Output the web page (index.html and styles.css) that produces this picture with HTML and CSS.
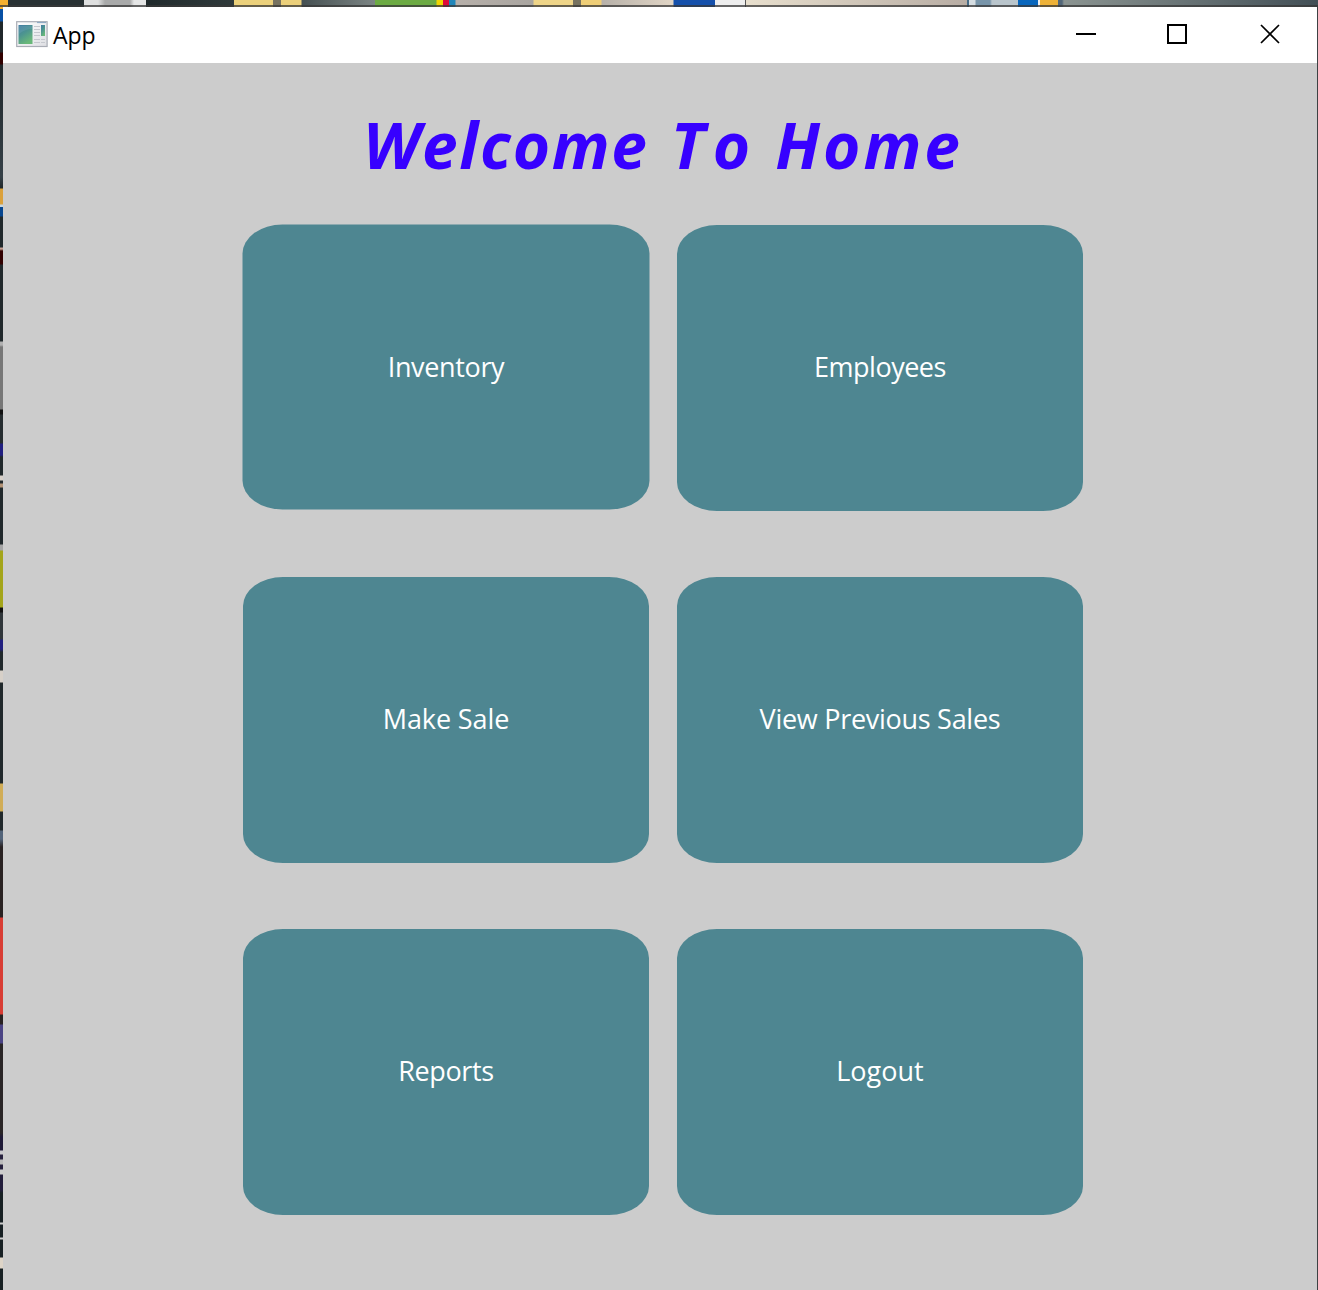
FILE: index.html
```html
<!DOCTYPE html>
<html lang="en">
<head>
<meta charset="utf-8">
<title>App</title>
<link rel="stylesheet" href="styles.css">
</head>
<body>
<div class="desktop">
  <div class="backdrop-top"></div>
  <div class="backdrop-left"></div>
  <main class="window">
    <header class="titlebar">
      <svg class="app-icon" width="32" height="27" viewBox="0 0 32 27" aria-hidden="true">
        <defs>
          <linearGradient id="pane" x1="0" y1="0" x2=".5" y2="1">
            <stop offset="0" stop-color="#437ca3"/><stop offset=".5" stop-color="#4c9490"/><stop offset="1" stop-color="#69b879"/>
          </linearGradient>
          <linearGradient id="frame" x1="0" y1="0" x2="1" y2="1">
            <stop offset="0" stop-color="#fff"/><stop offset="1" stop-color="#dedfe3"/>
          </linearGradient>
        </defs>
        <rect x=".7" y=".7" width="30.4" height="24.8" fill="url(#frame)" stroke="#a9adb5" stroke-width="1.2"/>
        <path d="M21 1.5h9" stroke="#8faac4" stroke-width="1.2"/>
        <rect x="2.500" y="4" width="14" height="19" fill="url(#pane)"/>
        <path d="M3 13q6-5 13-5V5H3z" fill="#8ab7d0" opacity=".2"/>
        <rect x="25" y="4" width="4" height="11" fill="url(#pane)"/>
        <path d="M18 5.500h6M18 8.500h6M18 11.500h6M18 14.500h6M18 18.500h6M18 21.500h6M25 18.500h4M25 21.500h4" stroke="#c5c8ce" stroke-width="1"/>
      </svg>
      <span class="app-name">App</span>
      <svg class="controls" width="206" height="22" viewBox="0 0 206 22" fill="none" stroke="#000" stroke-width="2" aria-hidden="true">
        <path d="M1 11h20"/>
        <rect x="93" y="2" width="18" height="18"/>
        <path d="M186 2l18 18M204 2l-18 18" stroke-width="1.7"/>
      </svg>
    </header>
    <section class="content">
      <h1 class="heading"><span class="word-welcome">Welcome</span> <span class="word-to">To</span> <span class="word-home">Home</span></h1>
      <nav class="menu">
        <button class="tile tile-inventory"><span class="label label-inventory">Inventory</span></button>
        <button class="tile"><span class="label label-employees">Employees</span></button>
        <button class="tile"><span class="label label-sale">Make Sale</span></button>
        <button class="tile"><span class="label label-history">View Previous Sales</span></button>
        <button class="tile"><span class="label label-reports">Reports</span></button>
        <button class="tile"><span class="label">Logout</span></button>
      </nav>
    </section>
  </main>
</div>
</body>
</html>
```
FILE: styles.css
```css
* { box-sizing: border-box; }

body {
  margin: 0;
  overflow: hidden;
  font-family: "Open Sans", "Noto Sans", sans-serif;
}

.desktop {
  display: grid;
  grid-template: 7px 1283px / 3px 1314px;
  width: 1318px;
  height: 1290px;
  background: #3c4143;
}

.backdrop-top {
  grid-column: 1 / -1;
  width: 1318px;
  background:
    linear-gradient(transparent 5px, rgba(55, 55, 55, .75) 5px),
    linear-gradient(90deg,
      #f5b02e 8px, #283133 8px 84px, #dfe0e0 84px 98px, #a9aaaa 105px 130px, #e5e6e6 134px 146px,
      #202a2c 146px, #303a3b 234px, #ecd17b 234px 273px, #77725f 273px 281px, #ecd07a 281px 301px,
      #455052 302px, #7c8584 375px, #6cab43 375px 436px, #f1d500 437px 443px, #df0a39 443px 449px,
      #2086b9 449px 455px, #b7b0aa 456px, #a9a5a0 533px, #efd588 534px 573px, #77725f 573px 581px,
      #efce76 581px 601px, #b7b1a9 602px, #e1d5c5 673px, #1550ab 674px 715px, #eeeeee 715px 745px,
      #555 745px 746px, #e8dfcd 746px, #b8ada4 967px, #456b86 967px 969px, #d5dde2 969px 975px,
      #7895aa 976px 990px, #b9c5cc 992px 1018px, #0866bd 1018px 1038px,
      #eee 1038px 1040px, #eeb238 1040px 1058px, #526779 1058px 1062px, #8b9491 1064px, #424f56 1318px);
}

.backdrop-left {
  background:
    linear-gradient(#f5b02e 2px, #0750a5 2px 14px, #20282b 15px 45px, #310000 46px 57px,
      #20282b 58px, #354047 170px, #20282b 181px, #dba13b 182px 197px, #c6d8e4 198px 200px, #06468f 200px 209px,
      #20282b 210px 240px, #c5a294 241px 242px, #310000 244px 257px, #20282b 258px 334px,
      #b1b1b1 335px 338px, #777 340px 402px, #111 403px 407px, #252c2f 408px 436px,
      #211f80 437px 448px, #20282b 450px 468px, #d7d0c8 469px 473px, #20282b 474px 476px,
      #b39376 477px 480px, #20282b 481px 537px, #a5a5a5 538px 543px, #a4a51a 544px 600px,
      #111 601px 605px, #30363a 606px 632px, #211f80 633px 642px, #20282b 645px 663px,
      #d7d0c8 664px 675px, #20282b 676px 776px, #d1ad57 777px 804px, #20282b 805px 823px,
      #526379 824px 832px, #292222 840px 910px, #d83d34 911px 1007px, #292222 1008px 1017px,
      #4b4484 1018px 1036px, #292526 1037px 1126px, #1e1936 1130px 1143px, #c9c8cc 1144px 1147px,
      #26203d 1148px 1152px, #bbb 1153px 1157px, #26203d 1158px 1162px, #ccc 1163px 1167px,
      #221d3b 1168px 1183px, #172023 1186px 1215px, #ccc 1216px 1217px, #172023 1218px 1230px,
      #ccc 1231px 1232px, #172023 1233px 1250px, #ddd4c7 1251px 1261px, #172023 1262px);
}

.window {
  display: flex;
  flex-direction: column;
  background: #ccc;
}

.titlebar {
  display: flex;
  height: 56px;
  padding: 14px 36px 0 13px;
  background: #fff;
}

.app-name {
  margin: -1px 0 0 5px;
  font-size: 23px;
  line-height: 30px;
  color: #000;
}

.controls {
  margin: 2px 0 0 auto;
}

.content {
  padding: 0 234px 0 240px;
}

.heading {
  display: flex;
  justify-content: center;
  height: 162px;
  margin: 0;
  padding-top: 37px;
  font: italic 700 64px/90px "Open Sans", "Noto Sans", sans-serif;
  white-space: nowrap;
  color: #3700ff;
}

.word-welcome { letter-spacing: 1.7px; }
.word-to { margin: 0 17px 0 22px; letter-spacing: 8px; font-kerning: none; }
.word-home { letter-spacing: 3px; }

.menu {
  display: grid;
  grid-template-columns: 406px 406px;
  grid-auto-rows: 286px;
  gap: 66px 28px;
}

.tile {
  display: flex;
  align-items: center;
  justify-content: center;
  padding: 0 0 2px;
  border: 0;
  border-radius: 40px / 29px;
  background: #4e8691;
  color: #fff;
  font: 400 27px/38px "Open Sans", "Noto Sans", sans-serif;
}

/* The focused tile sits half a pixel off the grid. */
.tile-inventory {
  margin: 0 -1px 1px 0;
  padding-bottom: 1px;
  transform: translate(-.5px, -.5px);
}

.label { white-space: nowrap; }
.label-inventory { letter-spacing: -.35px; }
.label-employees { letter-spacing: -.5px; }
.label-sale { letter-spacing: -.1px; }
.label-history { letter-spacing: -.28px; }
.label-reports { letter-spacing: -.4px; }
```
